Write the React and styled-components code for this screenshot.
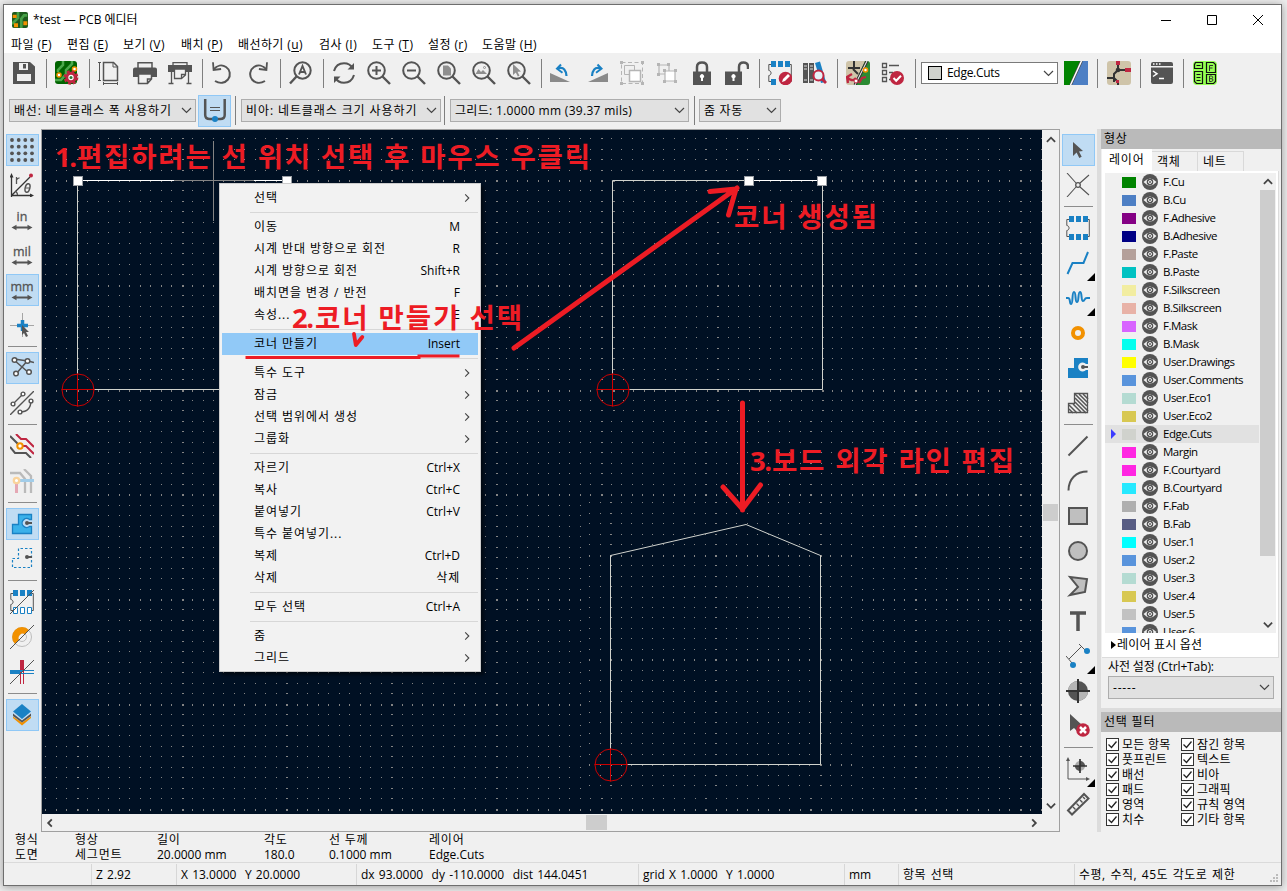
import React from 'react'
import styled, { createGlobalStyle, css } from 'styled-components'

const GlobalStyle = createGlobalStyle`
  * { box-sizing: border-box; }
  body {
    margin: 0;
    background: #ececec;
    overflow: hidden;
    font-family: "Open Sans", "Noto Sans CJK KR", sans-serif;
    font-size: 12px;
    line-height: 16px;
    color: #000;
    cursor: default;
  }
  svg { display: block; flex: none; }
`

const Desktop = styled.div`
  width: 1287px;
  height: 891px;
  padding: 4px 0 0 3px;
`

const Window = styled.div`
  width: 1279px;
  height: 882px;
  display: flex;
  flex-direction: column;
  background: #f0f0f0;
  border: 1px solid #6e6e6e;
  box-shadow: 0 1px 8px rgba(0, 0, 0, 0.35);
`

const Label = styled.span`
  white-space: pre;
  letter-spacing: ${(p) => p.$ls || 0}px;
`

/* title and menu bar */

const TitleBar = styled.div`
  height: 29px;
  display: flex;
  align-items: center;
  padding-left: 8px;
  background: #fff;
`

const TitleText = styled(Label)`
  flex: 1;
  margin-left: 5px;
`

const WindowButtons = styled.div`
  display: flex;
  gap: 34px;
  margin-right: 17px;
`

const MenuBar = styled.div`
  height: 19px;
  background: #fff;
  display: flex;
  align-items: center;
  padding: 3px 0 0 7px;
`

const MenuTitle = styled.div`
  width: ${(p) => p.$w}px;
  white-space: pre;
  letter-spacing: ${(p) => p.$ls || 0}px;
  u { text-underline-offset: 2px; }
`

/* toolbars */

const TopBar = styled.div`
  height: 40px;
  display: flex;
  align-items: center;
  padding-left: 2px;
`

const OptionsBar = styled.div`
  height: 36px;
  flex: none;
  display: flex;
  align-items: center;
  padding: 0 0 1px 5px;
`

const Tool = styled.div`
  width: 35px;
  flex: none;
  padding-left: 6px;
`

const BarLine = styled.div`
  width: 1px;
  height: 29px;
  flex: none;
  margin: 0 ${(p) => (p.$r === undefined ? 2 : p.$r)}px 0 ${(p) => (p.$l === undefined ? 5 : p.$l)}px;
  background: #7f7f7f;
`

const Combo = styled.div`
  width: ${(p) => p.$w}px;
  height: ${(p) => p.$h || 23}px;
  flex: none;
  display: flex;
  align-items: center;
  justify-content: space-between;
  padding: 0 3px 0 4px;
  background: ${(p) => (p.$white ? '#fff' : '#e1e1e1')};
  border: 1px solid ${(p) => (p.$white ? '#7a7a7a' : '#adadad')};
`

const LayerCombo = styled(Combo)`
  margin-left: 3px;
`

const LayerValue = styled.div`
  display: flex;
  align-items: center;
  gap: 5px;
  padding-left: 2px;
`

const LayerBox = styled.div`
  width: 14px;
  height: 14px;
  background: #d0d2cd;
  border: 1px solid #000;
`

const pressed = css`
  background: #c0dcf3;
  border-color: #90c8f6;
`

const Toggle = styled.div`
  width: 33px;
  height: 32px;
  margin-left: 2px;
  display: flex;
  align-items: center;
  justify-content: center;
  border: 1px solid transparent;
  ${(p) => p.$on && pressed}
`

const Body = styled.div`
  height: 703px;
  flex: none;
  display: flex;
`

const SideBar = styled.div`
  width: 37px;
  flex: none;
  padding: 5px 0 0 2px;
  display: flex;
  flex-direction: column;
`

const SideTool = styled.div`
  width: 33px;
  height: 32px;
  flex: none;
  margin-bottom: 3px;
  position: relative;
  padding: 3px;
  border: 1px solid transparent;
  ${(p) => p.$on && pressed}
`

const Corner = styled.i`
  position: absolute;
  right: -1px;
  bottom: -3px;
  border: solid transparent;
  border-width: 8px 0 0 8px;
  border-bottom: 8px solid #000;
  border-top: 0;
`

const SideLine = styled.div`
  height: 1px;
  width: 29px;
  flex: none;
  margin: 2px 0 5px 2px;
  background: #8c8c8c;
`

/* drawing area */

const Frame = styled.div`
  width: 1019px;
  flex: none;
  border: 1px solid #a0a0a0;
  display: flex;
  flex-direction: column;
`

const Upper = styled.div`
  display: flex;
  height: 684px;
`

const Canvas = styled.div`
  width: 1000px;
  height: 684px;
  position: relative;
  background: #001023;
`

const Overlay = styled.div`
  position: absolute;
  top: 0;
  left: 0;
`

const VScroll = styled.div`
  width: 17px;
  height: 100%;
  flex: none;
  display: flex;
  flex-direction: column;
  align-items: center;
  background: #f0f0f0;
  padding: ${(p) => p.$pad || '5px 0 3px'};
`

const VThumb = styled.div`
  width: 15px;
  height: ${(p) => p.$h}px;
  margin: ${(p) => p.$top}px 0 auto;
  background: #cdcdcd;
`

const HScroll = styled.div`
  width: 1000px;
  height: 17px;
  display: flex;
  align-items: center;
  padding: 0 3px 0 3px;
`

const HThumb = styled.div`
  width: 21px;
  height: 15px;
  margin: 0 auto 0 531px;
  background: #cdcdcd;
`

/* context menu */

const Menu = styled.div`
  position: absolute;
  left: 177px;
  top: 53px;
  width: 262px;
  height: 489px;
  padding: 3px 2px 2px;
  background: #f2f2f2;
  border: 1px solid #ccc;
  box-shadow: 3px 3px 3px rgba(0, 0, 0, 0.5);
`

const MenuItem = styled.div`
  height: 22px;
  display: flex;
  align-items: center;
  justify-content: space-between;
  padding: 0 ${(p) => (p.$sub ? 6 : 18)}px 0 32px;
  background: ${(p) => (p.$active ? '#91c9f7' : 'transparent')};
`

const MenuLine = styled.div`
  height: 1px;
  margin: 3px 0 3px 28px;
  background: #d7d7d7;
`

/* right panels */

const Panels = styled.div`
  width: 184px;
  flex: none;
  border-left: 4px solid #dcdcdc;
`

const PanelTitle = styled.div`
  height: 20px;
  padding: 2px 0 0 3px;
  background: #bababa;
`

const Tabs = styled.div`
  height: 22px;
  display: flex;
  align-items: flex-end;
  padding-left: 1px;
`

const Tab = styled.div`
  width: ${(p) => p.$w}px;
  height: ${(p) => (p.$on ? 22 : 20)}px;
  padding: ${(p) => (p.$on ? '2px 0 0 6px' : '2px 0 0 5px')};
  background: ${(p) => (p.$on ? '#fff' : '#f0f0f0')};
  border: 1px solid ${(p) => (p.$on ? '#fff' : '#d9d9d9')};
  border-bottom: 0;
  border-left-width: ${(p) => (p.$on ? 1 : 0)}px;
`

const TabPage = styled.div`
  width: 177px;
  height: 487px;
  margin-left: 1px;
  padding: 2px 2px 0 3px;
  background: #fff;
  border: solid #dcdcdc;
  border-width: 0 1px 1px 0;
`

const ListBox = styled.div`
  height: 460px;
  display: flex;
  overflow: hidden;
`

const LayerList = styled.div`
  flex: 1;
  height: 460px;
  overflow: hidden;
  background: #f0f0f0;
`

const LayerRow = styled.div`
  height: 18px;
  display: flex;
  align-items: center;
  padding-left: 6px;
  background: ${(p) => (p.$on ? '#e1e1e1' : 'transparent')};
`

const Marker = styled.i`
  width: 11px;
  flex: none;
  &::before {
    content: "";
    display: block;
    width: 0;
    border: 5px solid transparent;
    border-left: 5px solid ${(p) => (p.$on ? '#3c3cff' : 'transparent')};
    border-right: 0;
  }
`

const Swatch = styled.i`
  width: 14px;
  height: 11px;
  flex: none;
  margin-right: 6px;
  background: ${(p) => p.$c};
`

const LayerName = styled.span`
  margin-left: 5px;
  font-size: 11.5px;
  letter-spacing: -0.5px;
`

const DisplayOptions = styled.div`
  height: 24px;
  display: flex;
  align-items: center;
  gap: 1px;
  padding-left: 6px;
`

const Presets = styled.div`
  height: 50px;
  padding: 1px 7px 0;
`

const PresetCombo = styled(Combo)`
  margin-top: 1px;
`

const Sash = styled.div`
  height: 4px;
  background: #dcdcdc;
`

const FilterGrid = styled.div`
  display: grid;
  grid-template-columns: 75px 85px;
  grid-auto-rows: 15px;
  padding: 5px 0 0 5px;
`

const Check = styled.div`
  display: flex;
  align-items: center;
  gap: 3px;
`

const Tick = styled.div`
  width: 13px;
  height: 13px;
  flex: none;
  background: #fff;
  border: 1px solid #333;
`

/* message panel and status bar */

const Message = styled.div`
  height: 30px;
  flex: none;
  display: flex;
  padding-left: 11px;
`

const Field = styled.div`
  width: ${(p) => p.$w}px;
  flex: none;
  display: flex;
  flex-direction: column;
  line-height: 15px;
`

const StatusBar = styled.div`
  height: 23px;
  display: flex;
  align-items: center;
  border-top: 1px solid #dadada;
  position: relative;
`

const Cell = styled.div`
  width: ${(p) => p.$w}px;
  height: 21px;
  flex: none;
  padding: 3px 0 0 4px;
  word-spacing: 1.1px;
  border-right: 1px solid ${(p) => (p.$last ? 'transparent' : '#d7d7d7')};
`

const Grip = styled.div`
  position: absolute;
  right: 2px;
  bottom: 2px;
`

const G = '#545454'
const B = '#1a81c4'
const R = '#bf2641'
const O = '#f29100'

const Svg = ({ size = 24, children, ...rest }) => (
  <svg width={size} height={size} viewBox="0 0 24 24" fill="none" {...rest}>{children}</svg>
)

const Lens = ({ children }) => (
  <Svg stroke={G} strokeWidth="2">
    <circle cx="9.5" cy="9.5" r="8.3" />
    <path d="M15.5 15.5L23 23" strokeWidth="2.4" />
    {children}
  </Svg>
)

const Package = ({ children }) => (
  <Svg>
    <path d="M4 3.5H.8v6c3 .3 3 4.700 0 5v6H4M21 3.500h2.300v17H21" stroke={G} />
    {children}
  </Svg>
)

const pads = (y, h = 6) => `M3 ${y}h5v${h}h-5zM10 ${y}h5v${h}h-5zM17 ${y}h5v${h}h-5z`

const icons = {
  app: (
    <Svg size={16}>
      <rect width="24" height="24" rx="3" fill="#1d5a1d" />
      <path d="M9 0v9L0 18M23 5h-5l-4 5v14" stroke="#46a046" strokeWidth="4" />
      <path d="M1 4h6v5H1zM3 17h6v6H3zM17 14h6v6h-6z" fill={O} />
    </Svg>
  ),
  save: (
    <Svg>
      <path d="M1 1h17l5 4.500V23H1z" fill={G} />
      <path d="M7 2h9v7H7zM5 13h14v7H5z" fill="#f0f0f0" />
      <path d="M11 3h3v4.500h-3z" fill={G} />
    </Svg>
  ),
  boardSetup: (
    <Svg>
      <rect x="0" y="0" width="22" height="23" rx="3" fill="#006400" />
      <path d="M3 11V9l5-5V0M0 19h6l5-6V9l6-6V0" stroke="#4ba84b" strokeWidth="2.500" />
      <circle cx="4" cy="14" r="2" fill="#fff" stroke={O} strokeWidth="1.500" />
      <circle cx="19.500" cy="8" r="2" fill="#fff" stroke={O} strokeWidth="1.500" />
      <circle cx="16" cy="16.500" r="6.300" stroke={R} strokeWidth="2.200" strokeDasharray="2.800 2.148" />
      <circle cx="16" cy="16.500" r="4.200" fill="#fff" stroke={R} strokeWidth="3" />
      <circle cx="16" cy="16.500" r="1.500" fill="#2b7a35" />
    </Svg>
  ),
  page: (
    <Svg stroke={G}>
      <path d="M5.500 1.500h10l4 4v14h-14z" strokeWidth="1.500" />
      <path d="M15 1.500V6h5M1.500 1v19M0 1.500h3M0 19.500h3M5 22.500h15M5.500 21v3M19.500 21v3" />
    </Svg>
  ),
  print: (
    <Svg>
      <path d="M5 7V1.700h14V7" stroke={G} strokeWidth="1.500" />
      <path d="M2 6.500h20q2 0 2 2V16h-5v-3H5v3H0V8.500q0-2 2-2z" fill={G} />
      <path d="M5.500 13h13v5l-4 4.500h-9zM18.500 18h-4v4.500" stroke={G} strokeWidth="1.500" fill="#f0f0f0" />
    </Svg>
  ),
  plot: (
    <Svg>
      <path d="M5 5V1.700h14V5M3.500 11v11M20.500 11v11M0.500 22.500h5M18.500 22.500h5" stroke={G} strokeWidth="1.300" />
      <path d="M0 4h24v7H0z" fill={G} />
      <path d="M6.500 8h11v6l-4 3.500h-7zM17.500 13.500h-4v4" stroke={G} strokeWidth="1.300" fill="#f0f0f0" />
    </Svg>
  ),
  undo: (
    <Svg stroke={G} strokeWidth="2">
      <path d="M4 20c5 3 10 2 13-1.500 3.200-4.200 2-10-2-12.500-4-2.600-9-1.700-12.500 2.500" />
      <path d="M2 1.200l.6 7.800 7.500-1" strokeWidth="1.800" />
    </Svg>
  ),
  redo: (
    <Svg stroke={G} strokeWidth="2">
      <path d="M19 20c-5 3-10 2-13-1.500-3.200-4.200-2-10 2-12.500 4-2.600 9-1.700 12.500 2.500" />
      <path d="M21 1.200l-.6 7.800-7.500-1" strokeWidth="1.800" />
    </Svg>
  ),
  find: (
    <Svg stroke={G} strokeWidth="2">
      <circle cx="13.500" cy="9.500" r="8.200" />
      <path d="M7.500 15.500L1 22.500" strokeWidth="2.400" />
      <path d="M10 13.500l3.500-8.500 3.500 8.500M11 11h5" strokeWidth="1.900" />
    </Svg>
  ),
  refresh: (
    <Svg stroke={G} strokeWidth="2">
      <path d="M2 10C3.500 5 7 2.300 12 2.300c4 0 7 2 8.500 5M22 14c-1.500 5-5 7.700-10 7.700-4 0-7-2-8.500-5" />
      <path d="M22 2v6.500h-6.500zM2 22v-6.500h6.500z" fill={G} stroke="none" />
    </Svg>
  ),
  zoomIn: <Lens><path d="M9.500 5v9M5 9.500h9" /></Lens>,
  zoomOut: <Lens><path d="M5 9.500h9" /></Lens>,
  zoomPage: <Lens><path d="M6 4.500h5l3 3v7H6z" fill="#8f8f8f" stroke="none" /></Lens>,
  zoomObjects: <Lens><path d="M3.500 13l3-5 2.500 3 2-2 4 4z" fill="#8f8f8f" stroke="none" /><circle cx="12.500" cy="6.500" r="1" strokeWidth="1" stroke="#8f8f8f" /></Lens>,
  zoomSel: <Lens><path d="M6 3l8 7.500-3.500.3 2 4-1.700.8-2-4L6 14z" fill="#8f8f8f" stroke="none" /></Lens>,
  rotCcw: (
    <Svg>
      <path d="M0 12v9h20z" fill="#8a8a8a" />
      <path d="M8 7.500c6-2 8 2 8.500 7.500" stroke={B} strokeWidth="2.200" />
      <path d="M11 3.500L7 7.700l5.500 4" stroke={B} strokeWidth="2" />
    </Svg>
  ),
  rotCw: (
    <Svg>
      <path d="M23 12v9H3z" fill="#8a8a8a" />
      <path d="M15.500 7.500c-6-2-8 2-8.500 7.500" stroke={B} strokeWidth="2.200" />
      <path d="M12.500 3.500l4 4.200-5.500 4" stroke={B} strokeWidth="2" />
    </Svg>
  ),
  group: (
    <Svg stroke="#b5b5b5">
      <path d="M1.500 1.500h21v21h-21z" strokeDasharray="4 2.500" />
      <path d="M4.500 4.500h10v9h-10z" /><path d="M9.500 9.500h11v11h-11z" fill="#fff" strokeWidth="1.500" />
      <path d="M0 0h3v3H0zM21 0h3v3h-3zM0 21h3v3H0zM21 21h3v3h-3z" fill="#b5b5b5" stroke="none" />
    </Svg>
  ),
  ungroup: (
    <Svg stroke="#b5b5b5" strokeWidth="1.200">
      <path d="M4 4h10v9H4z" /><path d="M10 10h10v10H10z" fill="#fff" />
      <path d="M2 2h3v3H2zM12 2h3v3h-3zM2 12h3v3H2zM8 8h3v3H8zM19 8h3v3h-3zM8 19h3v3H8zM19 19h3v3h-3z" fill="#b5b5b5" stroke="none" />
    </Svg>
  ),
  lock: (
    <Svg>
      <path d="M7 11V6q0-4.500 5-4.500T17 6v5" stroke={G} strokeWidth="2.500" />
      <path d="M3 10.500h18V24H3z" fill={G} /><path d="M11 19v-2a2 2 0 112 0v3h-2z" fill="#fff" />
    </Svg>
  ),
  unlock: (
    <Svg>
      <path d="M14 11V6q0-4.500 4.500-4.500T23 6v2" stroke={G} strokeWidth="2.500" />
      <path d="M0 10.500h17V24H0z" fill={G} /><path d="M7.500 19v-2a2 2 0 112 0v3h-2z" fill="#fff" />
    </Svg>
  ),
  fpEditor: (
    <Package>
      <path d="M3 0h5v6H3zM10 0h5v6h-5zM17 0h5v6h-5zM3 18h5v6H3z" fill={B} />
      <circle cx="17.500" cy="17.500" r="6.800" fill={R} />
      <path d="M14 21l1-3 5-5 2 2-5 5z" fill="#fff" />
    </Package>
  ),
  library: (
    <Svg>
      <path d="M0 2h5v20H0zM6 2h5v20H6z" fill={G} />
      <path d="M1 5h3M1 8h3M7 5h3M7 8h3M1 19h3M7 19h3" stroke="#ddd" />
      <path d="M12 2l5-1.500L23 21l-5 1z" fill={B} />
      <circle cx="15.500" cy="14.500" r="5" fill="#e6f2f8" stroke={R} strokeWidth="2" />
      <path d="M19 18l4 4" stroke={R} strokeWidth="2.800" />
    </Svg>
  ),
  update: (
    <Svg>
      <rect width="24" height="24" rx="3" fill="#cfc4a9" />
      <path d="M19 0h2q3 0 3 3v18q0 3-3 3H8z" fill="#2b8a32" />
      <path d="M8 0v8M2 7h12M7 8l5 5" stroke="#333" strokeWidth="2" />
      <path d="M21 0L9 24" stroke="#333" strokeWidth="3" /><path d="M21 0L9 24" stroke="#fff" />
      <path d="M1 15c2 5 7 5 9 2M6 13l-5 3 1 6M13 22l3-5 4-1" stroke={R} strokeWidth="2.300" />
      <circle cx="19.500" cy="9" r="2" fill="#fff" stroke={O} strokeWidth="1.600" />
      <circle cx="10" cy="20" r="2" fill="#fff" stroke={R} />
    </Svg>
  ),
  drc: (
    <Svg>
      <path d="M1.500 2.500h4v4h-4zM1.500 9.500h4v4h-4zM1.500 16.500h4v4h-4zM8 4.500h10M8 11.500h4M8 18.500h3" stroke={G} strokeWidth="1.300" />
      <circle cx="16" cy="17" r="7" fill={R} /><path d="M12.500 17l2.700 2.700 4.800-5" stroke="#fff" strokeWidth="2" />
    </Svg>
  ),
  pair: (
    <Svg>
      <path d="M0 0h17L6 24H0z" fill="#008400" /><path d="M18 0h6v24H7z" fill="#4d7fc4" />
      <path d="M17.500 0L6.500 24" stroke="#444" strokeWidth="2.800" /><path d="M17.500 0L6.500 24" stroke="#fff" strokeWidth="1.500" />
    </Svg>
  ),
  schematic: (
    <Svg>
      <rect width="24" height="24" rx="3" fill="#cfc4a9" />
      <path d="M11 3v6l-4 4v8M0 17h7M11 9h9M7 17l4 4v3" stroke="#333" strokeWidth="2" />
      <path d="M9 0h4v4H9zM18 7h6v4h-6zM9 19h3v3H9z" fill={R} /><circle cx="11" cy="9" r="2.300" fill="#333" />
    </Svg>
  ),
  console: (
    <Svg>
      <path d="M1 3q0-2 2-2h18q2 0 2 2v2H1zM1 6.500h22V21q0 2-2 2H3q-2 0-2-2z" fill={G} />
      <path d="M3 3h1.500M6 3h1.500M9 3h1.500" stroke="#fff" strokeWidth="1.500" />
      <path d="M3 10l4 2.800L3 15.500M9 17.500h5" stroke="#fff" strokeWidth="1.500" />
    </Svg>
  ),
  plugin: (
    <Svg>
      <rect x="0" y="0" width="24" height="24" rx="4" fill="#94ff52" />
      <path d="M2.500 1.500h7v6h-8v-4zM1.500 10.500h8v12h-6l-2-2zM13.500 1.500h7l2 2v8h-9zM13.500 13.500h9v7l-2 2h-7zM3.500 4.500h4M3.500 13.500h4M3.500 16.500h4M3.500 19.500h4" stroke="#111" strokeWidth="1.200" />
      <path d="M16.500 10V4.500H20M16.500 7h3M16.500 15v5.500h1.700q1.800-.2 1.800-1.500t-1.500-1.300q1.200-.3 1.200-1.400T18.300 15zM16.500 17.700h2" stroke="#333" />
    </Svg>
  ),
  trackWidth: (
    <Svg>
      <path d="M2.200 0v16q0 4 4.500 4h10.500q4.500 0 4.500-4V0" stroke={G} strokeWidth="2.500" />
      <path d="M7 8.500h10M7 11.500h10" stroke={G} /><circle cx="12" cy="20" r="3" fill={B} />
    </Svg>
  ),

  // left toolbar
  grid: (
    <Svg fill={G}>
      {[2, 8.700, 15.300, 22].map((y) => [2, 8.700, 15.300, 22].map((x) => <circle key={x + '-' + y} cx={x} cy={y} r="1.900" fill={G} />))}
    </Svg>
  ),
  polar: (
    <Svg stroke={G}>
      <path d="M1.500 24V3M1 22.500h21M1.500 22.500L20 4" strokeWidth="1.300" stroke="#333" />
      <path d="M1.500 0L3.500 4.500h-4zM24 22.500l-4-2v4z" fill="#333" stroke="none" />
      <circle cx="21" cy="2.500" r="2" fill={R} stroke="none" />
      <path d="M6.500 4v7M6.500 7q1-2.200 3-2.200M5.500 18q2 2 2 4" strokeWidth="1.300" />
      <ellipse cx="17.500" cy="15" rx="2.300" ry="4.300" transform="rotate(15 17.500 15)" strokeWidth="1.500" /><path d="M15.500 15h4" />
    </Svg>
  ),
  cursor: (
    <Svg>
      <path d="M12.500 0v24M0 12.500h24" stroke="#a5a5a5" />
      <path d="M12.500 7v11M7 12.500h11" stroke={B} strokeWidth="3.500" />
      <path d="M12 12l7 7h-3l2 4-2 1-2-4-2 2z" fill={G} />
    </Svg>
  ),
  ratsnest: (
    <Svg stroke={G} strokeWidth="1.500">
      <path d="M4 4l15 13M18 4L6 18M4 3l14 2 6 1.500" />
      {[[4.500, 4], [17.500, 5], [19, 16], [6, 17.500]].map(([x, y]) => <circle key={x} cx={x} cy={y} r="2.300" fill="#fff" />)}
    </Svg>
  ),
  curved: (
    <Svg stroke={G} strokeWidth="1.400">
      <path d="M0 24L24 0M3 13L13 3M10 21q11 0 11-12" />
      {[[3, 13], [13, 3], [10, 21], [21, 10]].map(([x, y]) => <circle key={x} cx={x} cy={y} r="1.900" fill="#fff" />)}
    </Svg>
  ),
  netColor: (
    <Svg strokeWidth="2">
      <path d="M6 0l5 5h5l8 8M12 12h4l8 8" stroke={R} /><path d="M0 2l9 9M0 13l5 6h11l5 5" stroke={G} />
      <circle cx="10" cy="12" r="2.700" fill="#fff" stroke={O} />
    </Svg>
  ),
  highlight: (
    <Svg strokeWidth="2.300">
      <path d="M0 4h10l5 6v14M14 0l7 7v17" stroke="#bababa" /><path d="M8 11.500h16" stroke="#a2cde9" strokeWidth="3" />
      <path d="M6.500 13v11" stroke="#e5a8b4" strokeWidth="3" /><circle cx="6.500" cy="11.500" r="2.700" fill="#fff" stroke="#fad39b" />
    </Svg>
  ),
  zoneFill: (
    <Svg>
      <path d="M2.500 12.500h6v-10h13v5h-2a4.500 4.500 0 100 7h2v7h-19z" fill="#3ab1ea" stroke={B} strokeWidth="1.300" />
      <circle cx="17" cy="11" r="2" fill={G} /><path d="M17 11h5" stroke={G} strokeWidth="2" />
    </Svg>
  ),
  zoneOutline: (
    <Svg>
      <path d="M2.500 11.500h6v-10h13v19h-19z" stroke={B} strokeWidth="1.200" strokeDasharray="2.500 2" />
      <circle cx="17" cy="10" r="2" fill={G} /><path d="M17 10h5" stroke={G} strokeWidth="2" />
    </Svg>
  ),
  padSketch: (
    <Package>
      <path d={pads(0)} fill={B} /><path d="M3.500 17.500h4v6h-4zM10.500 17.500h4v6h-4zM17.500 17.500h4v6h-4z" stroke={B} fill="#fff" />
      <path d="M0 24L24 0" stroke={G} />
    </Package>
  ),
  viaSketch: (
    <Svg>
      <circle cx="12" cy="12" r="9.500" stroke="#bdbdbd" /><circle cx="12" cy="12" r="4.500" stroke="#bdbdbd" />
      <path d="M5 19A9.800 9.800 0 0119 5l-4 4a4.500 4.500 0 00-6 6z" fill={O} /><path d="M0 24L24 0" stroke={G} />
    </Svg>
  ),
  trackSketch: (
    <Svg>
      <path d="M12 0v12" stroke={R} strokeWidth="4" /><path d="M0 12h12" stroke={B} strokeWidth="4" />
      <path d="M10.500 12v12M13.500 12v12" stroke={R} /><path d="M12 10.500h12M12 13.500h12" stroke={B} />
      <path d="M0 24L24 0" stroke={G} />
    </Svg>
  ),
  layers: (
    <Svg>
      <path d="M3 13.500l9 6 9-6v1.500l-9 7.500L3 15z" fill={O} /><path d="M3 10.500l9 7 9-7v2.500l-9 6.500L3 13z" fill={G} />
      <path d="M12 1l9 7.500-9 7.500-9-7.500z" fill={B} />
    </Svg>
  ),

  // right toolbar
  select: <Svg><path d="M7 4l10 9-4 .4 2.700 5.400-2.400 1.200-2.700-5.500L7 18z" fill={G} /></Svg>,
  localRats: (
    <Svg stroke={G} strokeWidth="1.100">
      <path d="M1 0l9 10M23 2l-9 8M1 24l9-10M23 22l-9-8" /><circle cx="12" cy="12" r="2.300" strokeWidth="1.300" />
    </Svg>
  ),
  footprint: <Package><path d={pads(0)} fill={B} /><path d={pads(18)} fill={B} /></Package>,
  route: <Svg><path d="M1.500 23l5-11h11L22 1" stroke={B} strokeWidth="2" /></Svg>,
  tune: <Svg><path d="M0 12h2c3 0 1 6 3.200 6 2 0 .5-12 2.800-12s.8 10 3 10 .7-10 3-10 .8 9 3 9 .9-3 4-3h3" stroke={B} strokeWidth="2" /></Svg>,
  via: <Svg><circle cx="12" cy="12" r="5" stroke={O} strokeWidth="4" /></Svg>,
  zone: (
    <Svg>
      <path d="M2 12h6V2h14v6h-2a4.500 4.500 0 100 6h2v8H2z" fill={B} />
      <circle cx="17" cy="11" r="2" fill={G} /><path d="M17 11h5" stroke={G} strokeWidth="2" />
    </Svg>
  ),
  keepout: (
    <Svg stroke={G}>
      <path d="M2.500 12.500h6v-10h13v19h-19z" strokeWidth="1.300" />
      <path d="M9 3l12 12M9 7l13 13M9 11l11 11M13 3l9 9M17 3l5 5M7 13l8 8M3 14l8 8M3 18l4 4" strokeWidth="1.500" />
    </Svg>
  ),
  line: <Svg><path d="M2.500 21.500l19-19" stroke={G} strokeWidth="2" /></Svg>,
  arc: <Svg><path d="M2.500 21.500C2.500 10 10 2.500 21.500 2.500" stroke={G} strokeWidth="2" /></Svg>,
  rect: <Svg><path d="M3 4h18v16H3z" fill="#bfbfbf" stroke={G} strokeWidth="2" /></Svg>,
  circle: <Svg><circle cx="12" cy="12" r="9" fill="#bfbfbf" stroke={G} strokeWidth="2" /></Svg>,
  polygon: <Svg><path d="M4 3l17 2-2 13-15 3 8-8z" fill="#bfbfbf" stroke={G} strokeWidth="2" /></Svg>,
  text: <Svg><path d="M4 4h16M12 3v19" stroke={G} strokeWidth="3.500" /></Svg>,
  dimension: (
    <Svg>
      <path d="M3 15L16 2M0 12l6 7M13 0l7 7" stroke={G} />
      <circle cx="21" cy="7" r="3" fill={B} /><circle cx="7" cy="21" r="3" fill={B} />
    </Svg>
  ),
  origin: (
    <Svg>
      <circle cx="12" cy="12" r="10" fill={G} /><path d="M12 2a10 10 0 00-10 10H12zM12 12v10A10 10 0 0022 12z" fill="#b5b5b5" />
      <path d="M12 0v24M0 12h24" stroke="#333" strokeWidth="2" />
    </Svg>
  ),
  remove: (
    <Svg>
      <path d="M4 0l12 11-4 1 2 4-3 1-3-3-4 3z" fill={G} /><circle cx="17" cy="16" r="6.800" fill={R} />
      <path d="M14 13l6 6M20 13l-6 6" stroke="#fff" strokeWidth="2.500" />
    </Svg>
  ),
  gridOrigin: (
    <Svg>
      <path d="M2 2v20h20" stroke={G} /><path d="M2 0l2 4H0zM24 22l-4 2v-4z" fill={G} />
      <circle cx="14" cy="9" r="5" fill="#aaa" /><path d="M14 4a5 5 0 015 5h-5zM14 9v5a5 5 0 01-5-5z" fill={G} />
      <path d="M14 2v14M7 9h14" stroke="#333" strokeWidth="1.700" />
    </Svg>
  ),
  measure: (
    <Svg stroke={G}>
      <path d="M2 18.500L18 2l4.500 4.500L6 22.500z" strokeWidth="2" /><path d="M7 15l2.500 2.500M10.500 11.500l2.500 2.500M14 8l2.500 2.500M17 5l2 2" strokeWidth="1.400" />
    </Svg>
  ),
}

const units = (name, size) => (
  <Svg overflow="visible">
    <text x="12" y="12.500" textAnchor="middle" fontFamily="Open Sans, sans-serif" fontSize={size} fill={G} stroke={G} strokeWidth=".3">{name}</text>
    <path d="M5 19.500h14" stroke={G} strokeWidth="2" />
    <path d="M1.500 19.500l5-2.700v5.400zM22.500 19.500l-5-2.700v5.400z" fill={G} />
  </Svg>
)
icons.inch = units('in', 12.5)
icons.mil = units('mil', 12.5)
icons.mm = units('mm', 12.5)

const Chevron = ({ dir = 'down', w = 11, color = '#444', weight = 1.2 }) => {
  const d = { down: 'M1 3l4.500 4.500L10 3', up: 'M1 7.500L5.500 3 10 7.500', left: 'M7.500 1.500L3.500 5.500l4 4', right: 'M3.500 1.500l4 4-4 4' }[dir]
  return <svg width={w} height={w} viewBox="0 0 11 11"><path d={d} fill="none" stroke={color} strokeWidth={weight} /></svg>
}

const Eye = () => (
  <svg width="16" height="16" viewBox="0 0 16 16">
    <circle cx="8" cy="8" r="8" fill={G} />
    <path d="M1.500 8Q8 .8 14.500 8 8 15.200 1.500 8z" fill="#f0f0f0" />
    <circle cx="8" cy="8" r="3.300" fill={G} /><circle cx="8" cy="8" r="1.500" fill={G} stroke="#f0f0f0" />
  </svg>
)

const topTools = ['save', '|', 'boardSetup', '|', 'page', 'print', 'plot', '|', 'undo', 'redo', '|', 'find', '|', 'refresh', 'zoomIn', 'zoomOut', 'zoomPage', 'zoomObjects', 'zoomSel', '|', 'rotCcw', 'rotCw', 'group', 'ungroup', 'lock', 'unlock', '|', 'fpEditor', 'library', '|', 'update', 'drc', '|']
const leftTools = ['grid*', 'polar', 'inch', 'mil', 'mm*', 'cursor', '|', 'ratsnest*', 'curved', '|', 'netColor', 'highlight', '|', 'zoneFill*', 'zoneOutline', '|', 'padSketch', 'viaSketch', 'trackSketch', '|', 'layers*']
const rightTools = ['select*', 'localRats', '|', 'footprint', 'route+', 'tune+', 'via', 'zone', 'keepout', '|', 'line', 'arc', 'rect', 'circle', 'polygon', 'text', 'dimension+', 'origin', 'remove', '|', 'gridOrigin+', 'measure']

const menus = [['파일', 'F', 56], ['편집', 'E', 56], ['보기', 'V', 58], ['배치', 'P', 57], ['배선하기', 'u', 81], ['검사', 'I', 53], ['도구', 'T', 56], ['설정', 'r', 54], ['도움말', 'H', 60]]

const menuItems = [
  ['선택', '>'], null,
  ['이동', 'M'], ['시계 반대 방향으로 회전', 'R'], ['시계 방향으로 회전', 'Shift+R'], ['배치면을 변경 / 반전', 'F'], ['속성...', 'E'], null,
  ['코너 만들기', 'Insert', true], null,
  ['특수 도구', '>'], ['잠금', '>'], ['선택 범위에서 생성', '>'], ['그룹화', '>'], null,
  ['자르기', 'Ctrl+X'], ['복사', 'Ctrl+C'], ['붙여넣기', 'Ctrl+V'], ['특수 붙여넣기...', ''], ['복제', 'Ctrl+D'], ['삭제', '삭제'], null,
  ['모두 선택', 'Ctrl+A'], null,
  ['줌', '>'], ['그리드', '>'],
]

const layers = [
  ['F.Cu', '#008400'], ['B.Cu', '#4d7fc4'], ['F.Adhesive', '#840084'], ['B.Adhesive', '#000084'],
  ['F.Paste', '#b4a09a'], ['B.Paste', '#00c2c2'], ['F.Silkscreen', '#f2eda1'], ['B.Silkscreen', '#e8b2a7'],
  ['F.Mask', '#d864ff'], ['B.Mask', '#02ffee'], ['User.Drawings', '#ffff00'], ['User.Comments', '#5994dc'],
  ['User.Eco1', '#b4dbd2'], ['User.Eco2', '#d8c852'], ['Edge.Cuts', '#d0d2cd'], ['Margin', '#ff26e2'],
  ['F.Courtyard', '#ff26e2'], ['B.Courtyard', '#26e9ff'], ['F.Fab', '#afafaf'], ['B.Fab', '#585d84'],
  ['User.1', '#00ffff'], ['User.2', '#5994dc'], ['User.3', '#b4dbd2'], ['User.4', '#d8c852'], ['User.5', '#c2c2c2'], ['User.6', '#5994dc'],
]

const filters = ['모든 항목', '잠긴 항목', '풋프린트', '텍스트', '배선', '비아', '패드', '그래픽', '영역', '규칙 영역', '치수', '기타 항목']

const fields = [['형식', '도면', 60], ['형상', '세그먼트', 82], ['길이', '20.0000 mm', 107], ['각도', '180.0', 65], ['선 두께', '0.1000 mm', 100], ['레이어', 'Edge.Cuts', 90]]

const status = [['', 88], ['Z 2.92', 85], ['X 13.0000  Y 20.0000', 180], ['dx 93.0000  dy -110.0000  dist 144.0451', 282], ['grid X 1.0000  Y 1.0000', 206], ['mm', 54], ['항목 선택', 176], ['수평, 수직, 45도 각도로 제한', 190]]

const hangul = /[가-힣]/
const spacing = (s, v = 0.8) => (hangul.test(s) ? v : 0)

// one small rect per grid point, every tenth row and column drawn thicker
const PITCH = 10.475
const gridPath = (ox, oy, x0, y0, x1, y1, skip) => {
  let d = ''
  for (let i = Math.ceil((x0 - ox) / PITCH); ox + i * PITCH < x1; i++) {
    for (let j = Math.ceil((y0 - oy) / PITCH); oy + j * PITCH < y1; j++) {
      const x = Math.floor(ox + i * PITCH)
      const y = Math.floor(oy + j * PITCH)
      if (skip && skip(x, y)) continue
      const w = i % 10 === 0 ? 2 : 1
      const h = j % 10 === 0 ? 2 : 1
      d += `M${x} ${y}h${w}v${h}h-${w}z`
    }
  }
  return d
}

const inUpper = (x, y) => x > 604 && x < 835 && y > 175 && y < 416
const inLower = (x, y) => x > 584 && x < 857 && y > 498 && y < 793
const dots =
  gridPath(77.3, 180.5, 42, 130, 1042, 814, (x, y) => inUpper(x, y) || inLower(x, y)) +
  gridPath(613, 180.5, 605, 176, 835, 416) +
  gridPath(610.9, 764.6, 586, 499, 857, 793)

const Origin = ({ x, y }) => (
  <path d={`M${x - 16} ${y}h33M${x} ${y - 16}v33M${x - 15.5} ${y + 0.5}a16 16 0 1032 0a16 16 0 10-32 0`} stroke="#cc0000" fill="none" />
)

const Handle = ({ x }) => <rect x={x} y="176.500" width="9" height="9" fill="#fff" stroke="#9a9ea4" />

const Board = () => (
  <svg width="1000" height="684" viewBox="42 130 1000 684" fill="none">
    <path d={dots} fill="#848484" shapeRendering="crispEdges" />
    <path d="M77.500 180v194M94 389.500h130M612.500 374V180.500h210v209H628M610.500 749V555.500L746 524.500l74.500 31v209H626" stroke="#d0d2cd" />
    <path d="M82 180.500h92M254 180.500h30M753 180.500h66" stroke="#fff" />
    <path d="M174 180.500h80M213.500 141v80" stroke="#848484" />
    <Origin x={77.5} y={389.5} />
    <Origin x={612.5} y={389.5} />
    <Origin x={610.5} y={764.5} />
    <Handle x={73.5} />
    <Handle x={282.5} />
    <Handle x={744.5} />
    <Handle x={817.5} />
  </svg>
)

// number and caption are set apart because the digits run tighter than the hangul
const notes = [
  ['1.', 55, 167, 22], ['편집하려는 선 위치 선택 후 마우스 우클릭', 77, 167, 513],
  ['2.', 292, 327.5, 22], ['코너 만들기 선택', 315, 327.5, 207],
  ['코너 생성됨', 734, 227, 143],
  ['3.', 750, 471, 22], ['보드 외각 라인 편집', 772, 471, 242],
]

const Annotations = () => (
  <Overlay>
    <svg width="1000" height="684" viewBox="42 130 1000 684" fill="none" stroke="#ed1c24" strokeLinecap="round" strokeLinejoin="round">
      <path d="M514 348L737 188M710 191.500l26-2.500-7.500 26M742.500 403v107M723 487l19.500 22 18-24" strokeWidth="5" />
      <path d="M247 357.500h172M419 356h39" strokeWidth="3" strokeLinecap="square" />
      <path d="M354 334l1.800 11 6.500-8" strokeWidth="3.800" />
      <g fill="#ed1c24" stroke="none" fontWeight="700" fontSize="27.500" fontFamily="'Open Sans', 'Noto Sans CJK KR', sans-serif">
        {notes.map(([t, x, y, w]) => <text key={t} x={x} y={y} textLength={w}>{t}</text>)}
      </g>
    </svg>
  </Overlay>
)

const ContextMenu = () => (
  <Menu>
    {menuItems.map((m, i) => m === null ? <MenuLine key={i} /> : (
      <MenuItem key={i} $sub={m[1] === '>'} $active={m[2]}>
        <Label $ls={spacing(m[0], 0.95)}>{m[0]}</Label>
        {m[1] === '>' ? <Chevron dir="right" w={10} /> : <Label $ls={spacing(m[1])}>{m[1]}</Label>}
      </MenuItem>
    ))}
  </Menu>
)

const Side = ({ tools }) => (
  <SideBar>
    {tools.map((t, i) => t === '|' ? <SideLine key={i} /> : (
      <SideTool key={i} $on={t.endsWith('*')}>
        {icons[t.replace(/[*+]/, '')]}
        {t.endsWith('+') && <Corner />}
      </SideTool>
    ))}
  </SideBar>
)

const Appearance = () => (
  <>
    <PanelTitle><Label $ls={0.8}>형상</Label></PanelTitle>
    <Tabs>
      <Tab $w={50} $on><Label $ls={0.8}>레이어</Label></Tab>
      <Tab $w={46}><Label $ls={0.8}>객체</Label></Tab>
      <Tab $w={46}><Label $ls={0.8}>네트</Label></Tab>
    </Tabs>
    <TabPage>
      <ListBox>
        <LayerList>
          {layers.map(([name, color]) => (
            <LayerRow key={name} $on={name === 'Edge.Cuts'}>
              <Marker $on={name === 'Edge.Cuts'} />
              <Swatch $c={color} />
              <Eye />
              <LayerName>{name}</LayerName>
            </LayerRow>
          ))}
        </LayerList>
        <VScroll $pad="4px 0 3px">
          <Chevron dir="up" w={10} weight={2} />
          <VThumb $h={366} $top={3} />
          <Chevron w={10} weight={2} />
        </VScroll>
      </ListBox>
      <DisplayOptions>
        <svg width="5" height="8"><path d="M0 0l5 4-5 4z" /></svg>
        <Label $ls={0.2}>레이어 표시 옵션</Label>
      </DisplayOptions>
    </TabPage>
    <Presets>
      <Label $ls={-0.12}>사전 설정 (Ctrl+Tab):</Label>
      <PresetCombo $w={166}><Label $ls={0.8}>-----</Label><Chevron /></PresetCombo>
    </Presets>
  </>
)

const SelectionFilter = () => (
  <>
    <PanelTitle><Label $ls={0.8}>선택 필터</Label></PanelTitle>
    <FilterGrid>
      {filters.map((f) => (
        <Check key={f}>
          <Tick><svg width="11" height="11"><path d="M1.500 5.500l3 3 5-6" fill="none" stroke="#222" strokeWidth="1.300" /></svg></Tick>
          <Label $ls={0.25}>{f}</Label>
        </Check>
      ))}
    </FilterGrid>
  </>
)

const App = () => {
  return (
    <Desktop>
      <GlobalStyle />
      <Window>
        <TitleBar>
          {icons.app}
          <TitleText>*test — PCB 에디터</TitleText>
          <WindowButtons>
            <svg width="12" height="12"><path d="M1 6.500h10" stroke="#000" /></svg>
            <svg width="12" height="12"><path d="M1.500 1.500h9v9h-9z" stroke="#000" fill="none" /></svg>
            <svg width="12" height="12"><path d="M1 1l10 10M11 1L1 11" stroke="#000" /></svg>
          </WindowButtons>
        </TitleBar>
        <MenuBar>
          {menus.map(([name, key, w]) => <MenuTitle key={name} $w={w} $ls={0.4}>{name} (<u>{key}</u>)</MenuTitle>)}
        </MenuBar>
        <TopBar>
          {topTools.map((t, i) => t === '|' ? <BarLine key={i} /> : <Tool key={i}>{icons[t]}</Tool>)}
          <LayerCombo $w={137} $h={22} $white>
            <LayerValue><LayerBox /><Label $ls={-0.3}>Edge.Cuts</Label></LayerValue>
            <Chevron />
          </LayerCombo>
          <Tool>{icons.pair}</Tool>
          <BarLine $l={4} $r={3} />
          <Tool>{icons.schematic}</Tool>
          <BarLine $l={4} $r={3} />
          <Tool>{icons.console}</Tool>
          <BarLine $l={4} $r={3} />
          <Tool>{icons.plugin}</Tool>
        </TopBar>
        <OptionsBar>
          <Combo $w={187}><Label $ls={0.8}>배선: 네트클래스 폭 사용하기</Label><Chevron /></Combo>
          <Toggle $on>{icons.trackWidth}</Toggle>
          <BarLine $l={4} $r={5} />
          <Combo $w={200}><Label $ls={0.9}>비아: 네트클래스 크기 사용하기</Label><Chevron /></Combo>
          <BarLine $l={3} $r={5} />
          <Combo $w={239}><Label $ls={0.3}>그리드: 1.0000 mm (39.37 mils)</Label><Chevron /></Combo>
          <BarLine $l={5} $r={4} />
          <Combo $w={82}><Label $ls={0.7}>줌 자동</Label><Chevron /></Combo>
        </OptionsBar>
        <Body>
          <Side tools={leftTools} />
          <Frame>
            <Upper>
              <Canvas>
                <Board />
                <ContextMenu />
                <Annotations />
              </Canvas>
              <VScroll>
                <Chevron dir="up" w={10} weight={2} />
                <VThumb $h={17} $top={359} />
                <Chevron w={10} weight={2} />
              </VScroll>
            </Upper>
            <HScroll>
              <Chevron dir="left" w={10} weight={2} />
              <HThumb />
              <Chevron dir="right" w={10} weight={2} />
            </HScroll>
          </Frame>
          <Side tools={rightTools} />
          <Panels>
            <Appearance />
            <Sash />
            <SelectionFilter />
          </Panels>
        </Body>
        <Message>
          {fields.map(([name, value, w]) => (
            <Field key={name} $w={w}>
              <Label $ls={0.8}>{name}</Label>
              <Label $ls={spacing(value)}>{value}</Label>
            </Field>
          ))}
        </Message>
        <StatusBar>
          {status.map(([text, w], i) => (
            <Cell key={w} $w={w} $last={i === status.length - 1}><Label $ls={spacing(text, 0.5)}>{text}</Label></Cell>
          ))}
          <Grip>
            <svg width="9" height="9"><path d="M6 0h2v2H6zM3 3h2v2H3zM6 3h2v2H6zM0 6h2v2H0zM3 6h2v2H3zM6 6h2v2H6z" fill="#bbb" /></svg>
          </Grip>
        </StatusBar>
      </Window>
    </Desktop>
  )
}

export default App
